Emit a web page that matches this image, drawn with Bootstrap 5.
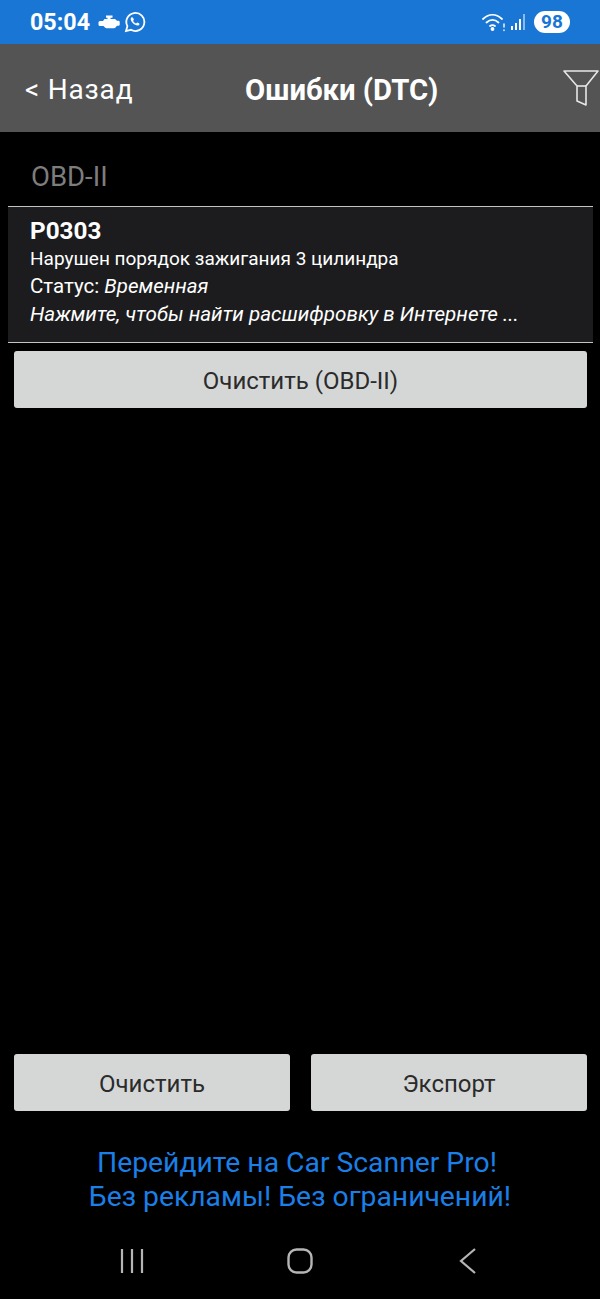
<!DOCTYPE html>
<html lang="ru">
<head>
  <meta charset="UTF-8">
  <title>Car Scanner</title>
  <link href="https://cdn.jsdelivr.net/npm/bootstrap@5.3.3/dist/css/bootstrap.min.css" rel="stylesheet">
  <style>
    html, body { background: #000; }
    body { font-family: Roboto, "Liberation Sans", sans-serif; width: 600px; height: 1299px; overflow: hidden; }
    .status-bar { height: 44px; background: #1976d4; color: #fff; padding: 0 30px; }
    .status-time { font-size: 23.300px; font-weight: 700; line-height: 1; padding-top: 1px; }
    .batt-pill { width: 36px; height: 22px; border-radius: 11px; background: #fff; color: #1976d4; font-size: 19px; font-weight: 700; line-height: 22px; text-align: center; }
    .top-bar { height: 88px; background: #545454; color: #fff; padding: 3px 0 0 25px; }
    .back-link { font-size: 28px; width: 200px; letter-spacing: .8px; }
    .top-title { font-size: 29.300px; font-weight: 700; white-space: nowrap; left: 245px; top: 50%; transform: translateY(-44%); }
    .filter-ico { right: 1px; top: 25px; }
    .section-name { color: #7d7d7d; font-size: 27.500px; padding: 29px 0 0 31px; height: 74px; line-height: 31px; }
    .dtc-row { margin: 0 7px 0 8px; height: 137px; background: #1c1c1e; border-top: 1px solid #c4c4c4; border-bottom: 1px solid #c4c4c4; color: #fff; padding: 9px 0 0 22px; font-size: 20.500px; line-height: 28px; }
    .dtc-code { font-size: 24.300px; font-weight: 700; line-height: 29px; }
    .dtc-desc { font-size: 19px; line-height: 27px; }
    .dtc-hint { font-size: 20.650px; }
    .gray-btn { background: #d5d7d7; color: #2b2b2b; border: 0; border-radius: 3px; font-size: 24px; height: 57px; display: block; padding: 3px 0 0; }
    .gray-btn:hover { background: #d5d7d7; color: #2b2b2b; }
    .clear-obd { margin: 8px 13px 0 14px; width: 573px; }
    .bottom-btns { margin-top: auto; padding: 0 13px 0 14px; gap: 21px; }
    .bottom-btns .gray-btn { width: 276px; }
    .promo { color: #1a7fe6; font-size: 28.300px; line-height: 34px; text-align: center; padding-top: 35px; }
    .promo-first { padding-right: 6px; }
    .nav-keys { height: 85px; padding-top: 34px; }
    .nav-slot { width: 168px; }
  </style>
</head>
<body class="d-flex flex-column">
  <div class="status-bar d-flex align-items-center">
    <span class="status-time">05:04</span>
    <svg class="ms-2" width="22" height="14" viewBox="0 0 22 14" fill="#fff"><path d="M8 .500h6.500v2.300H12.500V4H17l2 1.800h1.500a1.200 1.200 0 0 1 1.200 1.200v2.500a1.200 1.200 0 0 1-1.200 1.200H19l-1.500 1.800a2 2 0 0 1-1.500.7H8.500a2 2 0 0 1-1.500-.7L5.500 11H2a1.500 1.500 0 0 1-1.500-1.500v-2A1.500 1.500 0 0 1 2 6h3l1.500-2H9.500V2.800H8z"/></svg>
    <svg class="ms-1" width="22" height="22" viewBox="0 0 22 22" fill="none" stroke="#fff" stroke-width="1.800"><path d="M2 20l1.400-4.800A9 9 0 1 1 6.900 18.800z"/><path fill="#fff" stroke="none" d="M8 6.200c-.5 0-1.300.6-1.300 1.900 0 2.700 4 6.500 6.800 6.500 1.300 0 2-.9 2-1.600 0-.5-1.900-1.500-2.300-1.400-.4.100-.7.900-1.100.9-.8 0-2.800-1.800-2.900-2.600 0-.4.700-.8.700-1.200 0-.4-1-2.500-1.900-2.500z"/></svg>
    <div class="ms-auto d-flex align-items-center">
      <svg width="24" height="20" viewBox="0 0 24 20" fill="none" stroke="#fff" stroke-width="1.800" stroke-linecap="round"><path d="M1 7c6-5.500 13-5.500 19 0"/><path d="M4.500 10.500c4-3.500 8-3.500 12 0"/><path d="M8 14c2-1.500 3-1.500 5 0"/><circle cx="10.500" cy="17" r="1" fill="#fff"/><path d="M22 12v3M22 18v.5" stroke-width="1.400"/></svg>
      <svg class="ms-1" width="16" height="18" viewBox="0 0 16 18" fill="#fff"><rect x="1" y="13" width="2" height="4"/><rect x="5" y="10" width="2" height="7"/><rect x="9" y="6" width="2" height="11"/><rect x="13" y="1" width="2" height="16" opacity=".5"/></svg>
      <span class="batt-pill ms-2">98</span>
    </div>
  </div>

  <div class="top-bar d-flex align-items-center position-relative">
    <span class="back-link">&lt; Назад</span>
    <span class="top-title position-absolute">Ошибки (DTC)</span>
    <svg class="filter-ico position-absolute" width="36" height="38" viewBox="0 0 36 38" fill="none" stroke="#e6e6e6" stroke-width="1.600" stroke-linejoin="round"><path d="M1 2h34L23 17v19l-9-4V17z"/><path d="M14 17h9"/></svg>
  </div>

  <div class="section-name">OBD-II</div>

  <div class="dtc-row">
    <div class="dtc-code">P0303</div>
    <div class="dtc-desc">Нарушен порядок зажигания 3 цилиндра</div>
    <div>Статус: <em>Временная</em></div>
    <div class="dtc-hint"><em>Нажмите, чтобы найти расшифровку в Интернете ...</em></div>
  </div>
  <button type="button" class="btn gray-btn clear-obd">Очистить (OBD-II)</button>

  <div class="bottom-btns d-flex">
    <button type="button" class="btn gray-btn">Очистить</button>
    <button type="button" class="btn gray-btn">Экспорт</button>
  </div>

  <div class="promo"><span class="promo-first">Перейдите на Car Scanner Pro!</span><br>Без рекламы! Без ограничений!</div>

  <div class="nav-keys d-flex justify-content-center">
    <div class="nav-slot d-flex justify-content-center">
      <svg width="26" height="26" viewBox="0 0 26 26" stroke="#b5b5b5" stroke-width="2.200"><path d="M3 1v24M13 1v24M23 1v24"/></svg>
    </div>
    <div class="nav-slot d-flex justify-content-center">
      <svg width="26" height="26" viewBox="0 0 26 26" fill="none" stroke="#b5b5b5" stroke-width="2.400"><rect x="1.500" y="1.500" width="23" height="23" rx="8"/></svg>
    </div>
    <div class="nav-slot d-flex justify-content-center">
      <svg width="18" height="26" viewBox="0 0 18 26" fill="none" stroke="#b5b5b5" stroke-width="2.200"><path d="M16 1L2 13l14 12"/></svg>
    </div>
  </div>
</body>
</html>
